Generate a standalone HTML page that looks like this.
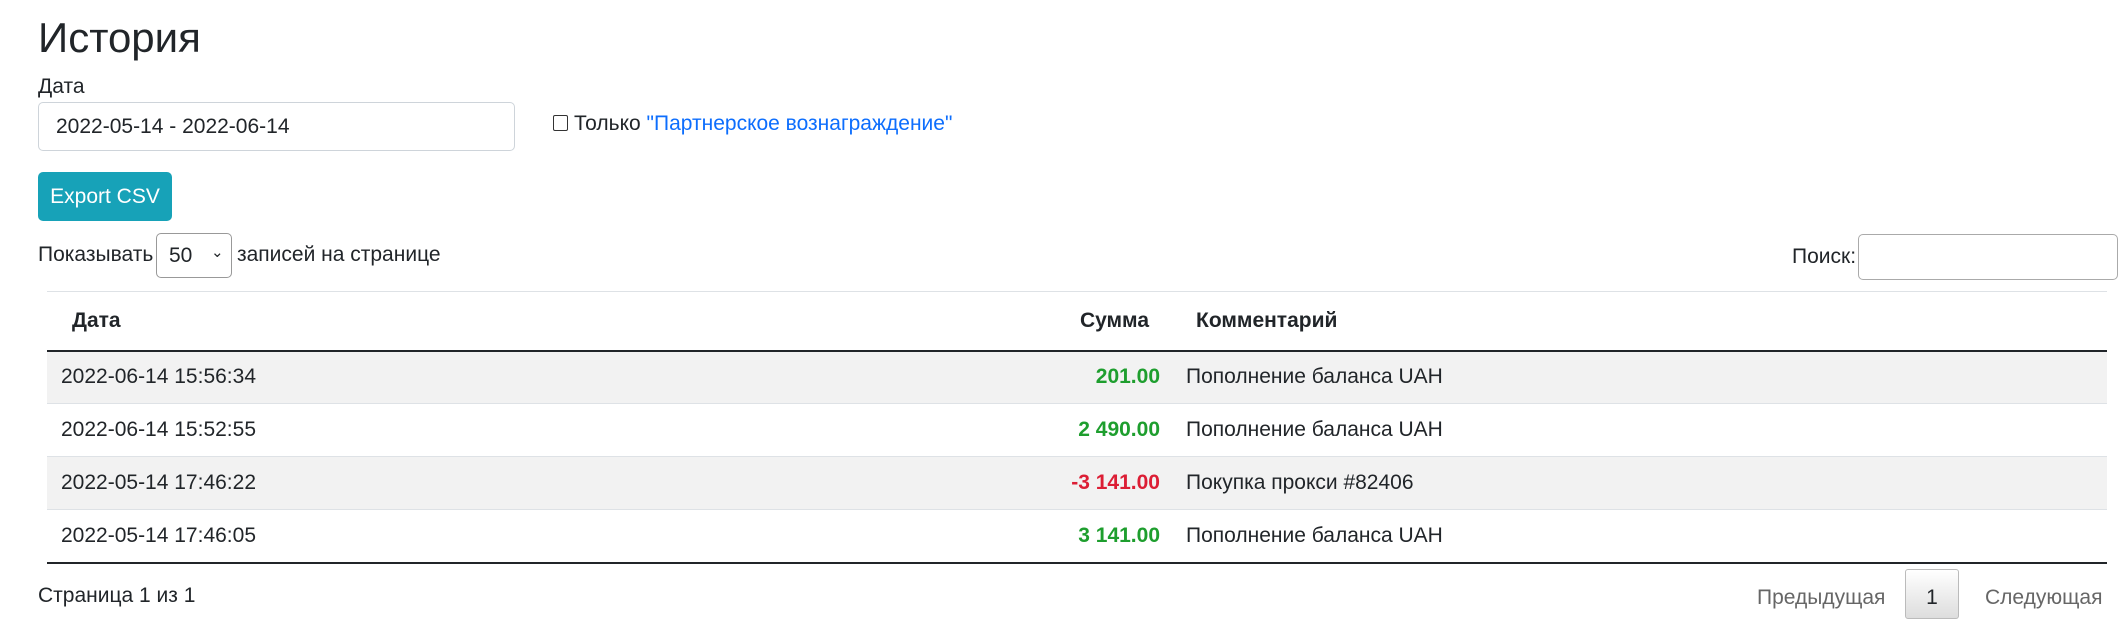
<!DOCTYPE html>
<html><head><meta charset="utf-8"><style>
*{box-sizing:border-box;margin:0;padding:0}
body{width:2124px;height:605px;overflow:hidden;background:#fff;font-family:"Liberation Sans",sans-serif;color:#212529;font-size:21px;position:relative}
.a{position:absolute;white-space:nowrap}
h1{position:absolute;left:38px;top:14px;font-size:42px;font-weight:500;color:#212529}
.inp{position:absolute;border:1px solid #ced4da;border-radius:5px;background:#fff}
table{position:absolute;left:47px;top:291px;width:2060px;border-collapse:collapse;border-top:1px solid #dee2e6;table-layout:fixed;white-space:nowrap}
th{height:59px;font-weight:bold;text-align:left;border-bottom:2px solid #212529;padding:0 0 0 25px}
td{height:53px;padding:0 0 0 14px;border-bottom:1px solid #dee2e6}
tr:nth-child(odd) td{background:#f2f2f2}
tbody tr:last-child td{border-bottom:2px solid #212529}
.r{text-align:right;padding:0 16px 0 0;font-weight:bold}
th.r{padding-right:27px}
.g{color:#1e9e2e}.rd{color:#dc1e35}
</style></head><body>
<h1>История</h1>
<div class="a" style="left:38px;top:75px">Дата</div>
<div class="inp" style="left:38px;top:102px;width:477px;height:49px"><span class="a" style="left:17px;top:12px">2022-05-14 - 2022-06-14</span></div>
<div class="a" style="left:553px;top:115px;width:15px;height:16px;border:1.5px solid #333;border-radius:2px"></div>
<div class="a" style="left:574px;top:112px">Только <span style="color:#0d6efd">"Партнерское вознаграждение"</span></div>
<div class="a" style="left:38px;top:172px;width:134px;height:49px;background:#17a2b8;border-radius:5px;color:#fff;text-align:center;line-height:49px">Export CSV</div>
<div class="a" style="left:38px;top:243px">Показывать</div>
<div class="inp" style="left:156px;top:233px;width:76px;height:45px;border-color:#999"><span class="a" style="left:12px;top:10px">50</span><span class="a" style="left:54px;top:9px;font-size:15px">&#8964;</span></div>
<div class="a" style="left:237px;top:243px">записей на странице</div>
<div class="a" style="left:1792px;top:245px">Поиск:</div>
<div class="inp" style="left:1858px;top:234px;width:260px;height:46px;border-color:#aaa"></div>
<table>
<colgroup><col style="width:1000px"><col style="width:129px"><col></colgroup>
<thead><tr><th>Дата</th><th class="r">Сумма</th><th style="padding-left:20px">Комментарий</th></tr></thead>
<tbody>
<tr><td>2022-06-14 15:56:34</td><td class="r g">201.00</td><td style="padding-left:10px">Пополнение баланса UAH</td></tr>
<tr><td>2022-06-14 15:52:55</td><td class="r g">2 490.00</td><td style="padding-left:10px">Пополнение баланса UAH</td></tr>
<tr><td>2022-05-14 17:46:22</td><td class="r rd">-3 141.00</td><td style="padding-left:10px">Покупка прокси #82406</td></tr>
<tr><td>2022-05-14 17:46:05</td><td class="r g">3 141.00</td><td style="padding-left:10px">Пополнение баланса UAH</td></tr>
</tbody></table>
<div class="a" style="left:38px;top:584px">Страница 1 из 1</div>
<div class="a" style="left:1757px;top:586px;color:#666">Предыдущая</div>
<div class="a" style="left:1905px;top:569px;width:54px;height:50px;border:1px solid #bbb;border-radius:3px;background:linear-gradient(#fff,#ddd);text-align:center;padding-top:16px">1</div>
<div class="a" style="left:1985px;top:586px;color:#666">Следующая</div>
</body></html>
